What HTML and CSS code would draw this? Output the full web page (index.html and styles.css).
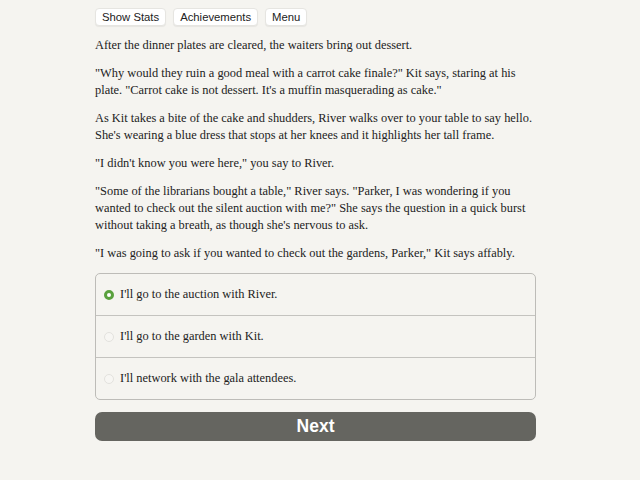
FILE: index.html
```html
<!DOCTYPE html>
<html>
<head>
<meta charset="utf-8">
<link rel="stylesheet" href="styles.css">
</head>
<body>
<div class="container">
  <div class="buttons">
    <button class="spacedLink">Show Stats</button>
    <button class="spacedLink">Achievements</button>
    <button class="spacedLink">Menu</button>
  </div>
  <div class="text">
    <p>After the dinner plates are cleared, the waiters bring out dessert.</p>
    <p>"Why would they ruin a good meal with a carrot cake finale?" Kit says, staring at his plate. "Carrot cake is not dessert. It's a muffin masquerading as cake."</p>
    <p>As Kit takes a bite of the cake and shudders, River walks over to your table to say hello. She's wearing a blue dress that stops at her knees and it highlights her tall frame.</p>
    <p>"I didn't know you were here," you say to River.</p>
    <p>"Some of the librarians bought a table," River says. "Parker, I was wondering if you wanted to check out the silent auction with me?" She says the question in a quick burst without taking a breath, as though she's nervous to ask.</p>
    <p>"I was going to ask if you wanted to check out the gardens, Parker," Kit says affably.</p>
  </div>
  <form class="choice">
    <label class="option"><input type="radio" name="choice" checked><span class="radio"></span>I'll go to the auction with River.</label>
    <label class="option"><input type="radio" name="choice"><span class="radio"></span>I'll go to the garden with Kit.</label>
    <label class="option"><input type="radio" name="choice"><span class="radio"></span>I'll network with the gala attendees.</label>
  </form>
  <button class="next">Next</button>
</div>
</body>
</html>
```

FILE: styles.css
```css
html, body {
  margin: 0;
  padding: 0;
  background: #f5f4f0;
}

.container {
  width: 441px;
  margin-left: 95px;
  padding-top: 8px;
  font-family: "Liberation Serif", serif;
  font-size: 12.4px;
  line-height: 17px;
  color: #222;
}

.buttons {
  display: flex;
  gap: 7px;
}

.spacedLink {
  font-family: "Liberation Sans", sans-serif;
  font-size: 11.3px;
  color: #222;
  background: #fff;
  border: 1px solid #e6e5e1;
  border-radius: 4px;
  height: 18px;
  padding: 0 6px;
  box-shadow: 0 1px 1px rgba(0,0,0,0.06);
}

.text p {
  margin: 11px 0 0;
}

.choice {
  margin-top: 11px;
  border: 1px solid #bdbcb8;
  border-radius: 5px;
}

.option {
  display: flex;
  align-items: center;
  height: 41px;
  padding-left: 8px;
  border-top: 1px solid #c4c3bf;
}

.option:first-child {
  border-top: none;
}

.option input {
  display: none;
}

.radio {
  width: 10px;
  height: 10px;
  border-radius: 50%;
  background: #f7f6f3;
  border: 1px solid #e3e2de;
  margin-right: 6px;
  box-sizing: border-box;
}

.option input:checked + .radio {
  background: #fff;
  border: 3px solid #5aa13e;
}

.next {
  display: block;
  width: 100%;
  margin-top: 12px;
  height: 29px;
  border: none;
  border-radius: 7px;
  background: #656560;
  color: #fff;
  font-family: "Liberation Sans", sans-serif;
  font-weight: bold;
  font-size: 17.5px;
}
```
